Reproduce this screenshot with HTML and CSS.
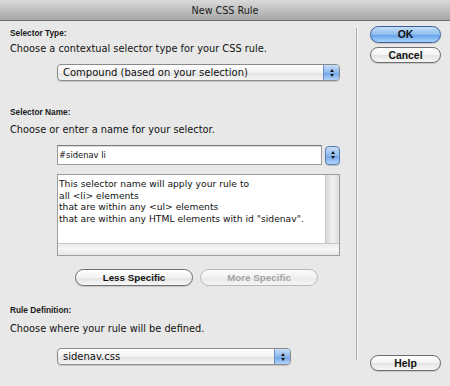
FILE: index.html
```html
<!DOCTYPE html>
<html lang="en">

<head>
  <meta charset="UTF-8" />
  <title>New CSS Rule</title>
  <link rel="stylesheet" href="styles.css">
</head>

<body>
  <div class="window">
    <div class="titlebar">New CSS Rule</div>
    <div class="content">
      <div class="main">
        <div class="section-label first">Selector Type:</div>
        <div class="desc">Choose a contextual selector type for your CSS rule.</div>
        <div class="select wide">
          <span class="select-text">Compound (based on your selection)</span>
          <span class="stepper"><span class="up"></span><span class="down"></span></span>
        </div>

        <div class="section-label name-label">Selector Name:</div>
        <div class="desc tight">Choose or enter a name for your selector.</div>
        <div class="combo">
          <div class="text-field">#sidenav li</div>
          <span class="stepper square"><span class="up"></span><span class="down"></span></span>
        </div>
        <div class="info-box">
          <div class="info-text">
            This selector name will apply your rule to<br>
            all &lt;li&gt; elements<br>
            that are within any &lt;ul&gt; elements<br>
            that are within any HTML elements with id "sidenav".
          </div>
          <div class="vscroll"></div>
          <div class="hscroll"></div>
        </div>
        <div class="specific-row">
          <button class="aqua wide-btn">Less Specific</button>
          <button class="aqua wide-btn" disabled>More Specific</button>
        </div>

        <div class="section-label rule-label">Rule Definition:</div>
        <div class="desc tight2">Choose where your rule will be defined.</div>
        <div class="select narrow">
          <span class="select-text">sidenav.css</span>
          <span class="stepper"><span class="up"></span><span class="down"></span></span>
        </div>
      </div>
      <div class="divider"></div>
      <div class="side">
        <button class="aqua default">OK</button>
        <button class="aqua">Cancel</button>
        <button class="aqua help">Help</button>
      </div>
    </div>
  </div>
</body>

</html>
```

FILE: styles.css
```css
body {
  margin: 0;
  font-family: 'DejaVu Sans', sans-serif;
  background: #e8e8e8;
  color: #111;
}

.window {
  width: 450px;
  height: 386px;
  display: flex;
  flex-direction: column;
  background: #e8e8e8;
}

.titlebar {
  height: 21px;
  line-height: 21px;
  text-align: center;
  font-size: 9.6px;
  color: #1a1a1a;
  background: linear-gradient(#dadada, #a6a6a6);
  border-bottom: 1px solid #6e6e6e;
  box-sizing: border-box;
}

.content {
  flex: 1;
  display: flex;
}

.main {
  width: 346px;
  padding-left: 10px;
}

.section-label {
  font-family: 'Liberation Sans', Arial, sans-serif;
  font-size: 8.3px;
  font-weight: bold;
  line-height: 14px;
  height: 14px;
  color: #1a1a1a;
}

.section-label.first {
  margin-top: 5px;
}

.section-label.name-label {
  margin-top: 24px;
}

.section-label.rule-label {
  margin-top: 17px;
}

.desc {
  font-size: 9.8px;
  line-height: 18px;
  height: 18px;
}

.desc.tight {
  margin-top: 2px;
}

.desc.tight2 {
  margin-top: 3px;
}

/* popup menus */
.select {
  margin-left: 47px;
  height: 17px;
  box-sizing: border-box;
  border: 1px solid #8a8a8a;
  border-radius: 4px;
  background: linear-gradient(#ffffff, #f1f1f1 50%, #e2e2e2 51%, #f4f4f4);
  display: flex;
  align-items: center;
  box-shadow: 0 1px 1px rgba(0, 0, 0, 0.15);
}

.select.wide {
  margin-top: 6px;
  width: 283px;
}

.select.narrow {
  margin-top: 10px;
  width: 234px;
}

.select-text {
  flex: 1;
  padding-left: 5px;
  font-size: 10px;
}

.stepper {
  width: 16px;
  height: 15px;
  box-sizing: border-box;
  border-left: 1px solid #6a8fc4;
  border-radius: 0 3px 3px 0;
  background: linear-gradient(#c9def6, #8fb9ee 50%, #6ea3e8 51%, #b2d3f8);
  display: flex;
  flex-direction: column;
  align-items: center;
  justify-content: center;
  gap: 2px;
}

.stepper .up,
.stepper .down {
  width: 0;
  height: 0;
  border-left: 2.5px solid transparent;
  border-right: 2.5px solid transparent;
}

.stepper .up {
  border-bottom: 3px solid #1a1a1a;
}

.stepper .down {
  border-top: 3px solid #1a1a1a;
}

.stepper.square {
  width: 15px;
  height: 19px;
  margin-left: 3px;
  border: 1px solid #5a7fb4;
  border-radius: 4px;
  box-shadow: 0 1px 1px rgba(0, 0, 0, 0.2);
}

/* name combo */
.combo {
  margin-top: 6px;
  margin-left: 47px;
  width: 283px;
  height: 20px;
  display: flex;
  align-items: center;
}

.text-field {
  width: 265px;
  height: 20px;
  box-sizing: border-box;
  border: 1px solid #9a9a9a;
  border-top-color: #7a7a7a;
  background: #fff;
  font-size: 8.4px;
  line-height: 18px;
  padding-left: 1px;
  box-shadow: inset 0 1px 1px rgba(0, 0, 0, 0.15);
}

.info-box {
  margin-top: 9px;
  margin-left: 47px;
  width: 283px;
  height: 82px;
  box-sizing: border-box;
  border: 1px solid #9c9c9c;
  background: #fff;
  display: grid;
  grid-template-columns: 1fr 13px;
  grid-template-rows: 1fr 11px;
}

.info-text {
  font-size: 9.2px;
  line-height: 11.5px;
  padding: 3px 0 0 1px;
  border-right: 1px solid #c8c8c8;
  border-bottom: 1px solid #c8c8c8;
}

.vscroll {
  background: linear-gradient(90deg, #d8d8d8, #f0f0f0 50%, #dcdcdc);
  border-bottom: 1px solid #c8c8c8;
}

.hscroll {
  grid-column: 1 / 3;
  background: linear-gradient(#ececec, #f6f6f6 50%, #e6e6e6);
}

.specific-row {
  margin-top: 13px;
  margin-left: 65px;
  display: flex;
  gap: 7px;
}

/* aqua push buttons */
.aqua {
  height: 17px;
  padding: 0;
  font-family: 'Liberation Sans', Arial, sans-serif;
  font-size: 9.8px;
  font-weight: bold;
  color: #111;
  border: 1px solid #6e6e6e;
  border-radius: 9px;
  background: linear-gradient(#ffffff, #f3f3f3 50%, #e3e3e3 51%, #f7f7f7);
  box-shadow: 0 1px 1px rgba(0, 0, 0, 0.15);
  box-sizing: border-box;
}

.aqua:disabled {
  color: #a3a3a3;
  border-color: #b8b8b8;
  background: linear-gradient(#fbfbfb, #f1f1f1 50%, #e9e9e9 51%, #f5f5f5);
  box-shadow: none;
}

.wide-btn {
  width: 118px;
}

.divider {
  width: 1px;
  margin: 7px 0 26px;
  background: #adadad;
  border-right: 1px solid #f6f6f6;
}

.side {
  flex: 1;
  padding: 5px 9px 0 12px;
  display: flex;
  flex-direction: column;
  gap: 4px;
}

.side .aqua {
  width: 71px;
  height: 16px;
  font-size: 10.4px;
}

.side .default {
  height: 17px;
  border-color: #3b5f9a;
  background: linear-gradient(#c4def9, #8ebdf0 50%, #5fa0ea 51%, #a8d3fb);
}

.side .help {
  margin-top: auto;
  margin-bottom: 15px;
}
```
